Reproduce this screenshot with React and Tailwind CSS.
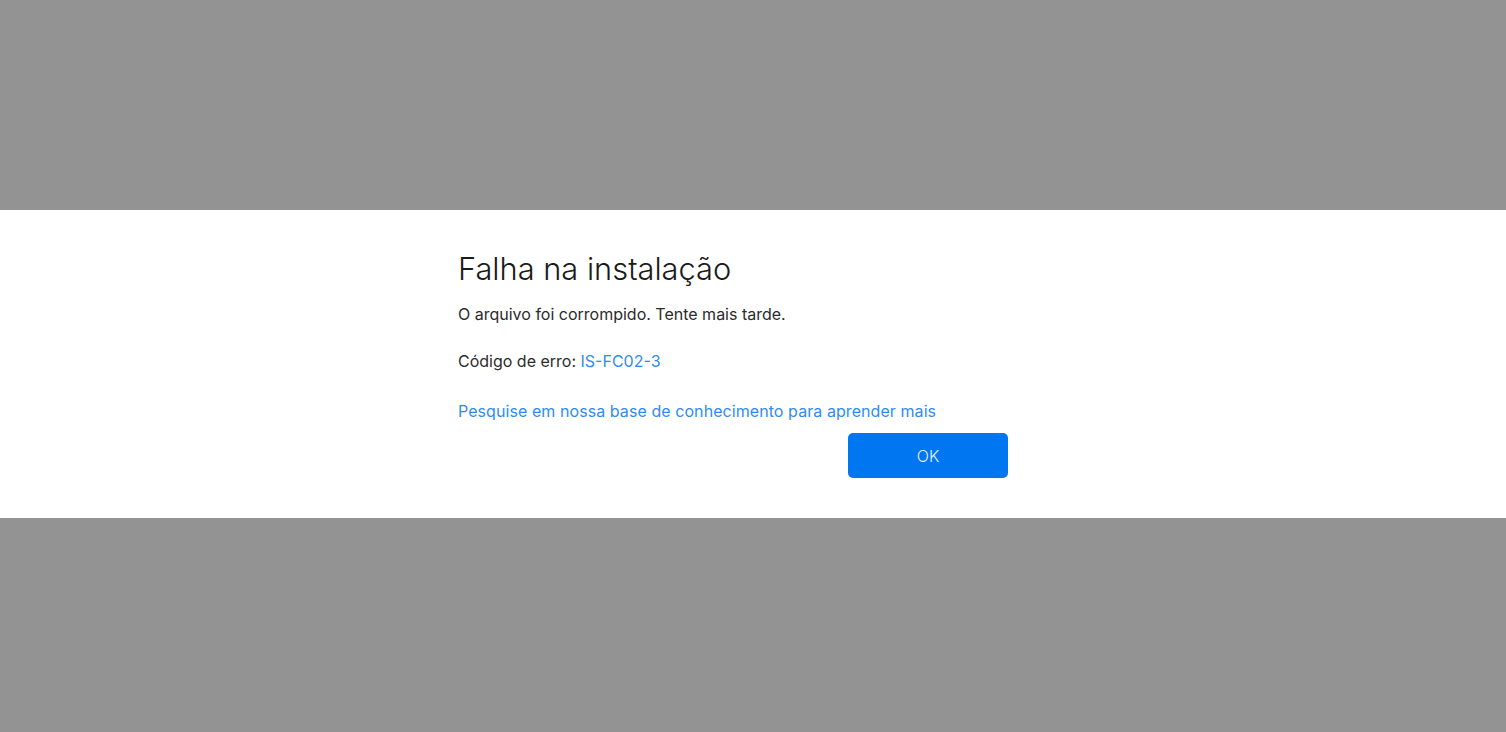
export default function App() {
  return (
    <div className="w-full h-[732px] bg-[#939393] pt-[210px]" style={{ fontFamily: 'Inter, "Noto Sans", sans-serif' }}>
      <div className="bg-white h-[308px] w-full">
        <div className="w-[590px] mx-auto pr-10 pt-[39px]">
          <h1 className="text-[30.8px] leading-[40px] font-light text-[#1a1a1a]">Falha na instalação</h1>
          <p className="mt-[13px] text-[16px] leading-[24px] text-[#2b2b2b]">O arquivo foi corrompido. Tente mais tarde.</p>
          <p className="mt-[23px] text-[16px] leading-[24px] text-[#2b2b2b]">
            Código de erro: <span className="text-[#2f8bf2]">IS-FC02-3</span>
          </p>
          <p className="mt-[26px] text-[16px] leading-[24px] text-[#2f8bf2] tracking-[0.07px]">Pesquise em nossa base de conhecimento para aprender mais</p>
          <div className="flex justify-end mt-[10px]">
            <button className="w-[160px] h-[45px] rounded-[5px] bg-[#0077f0] text-[#e8f1ff] text-[16px] font-light">OK</button>
          </div>
        </div>
      </div>
    </div>
  );
}
